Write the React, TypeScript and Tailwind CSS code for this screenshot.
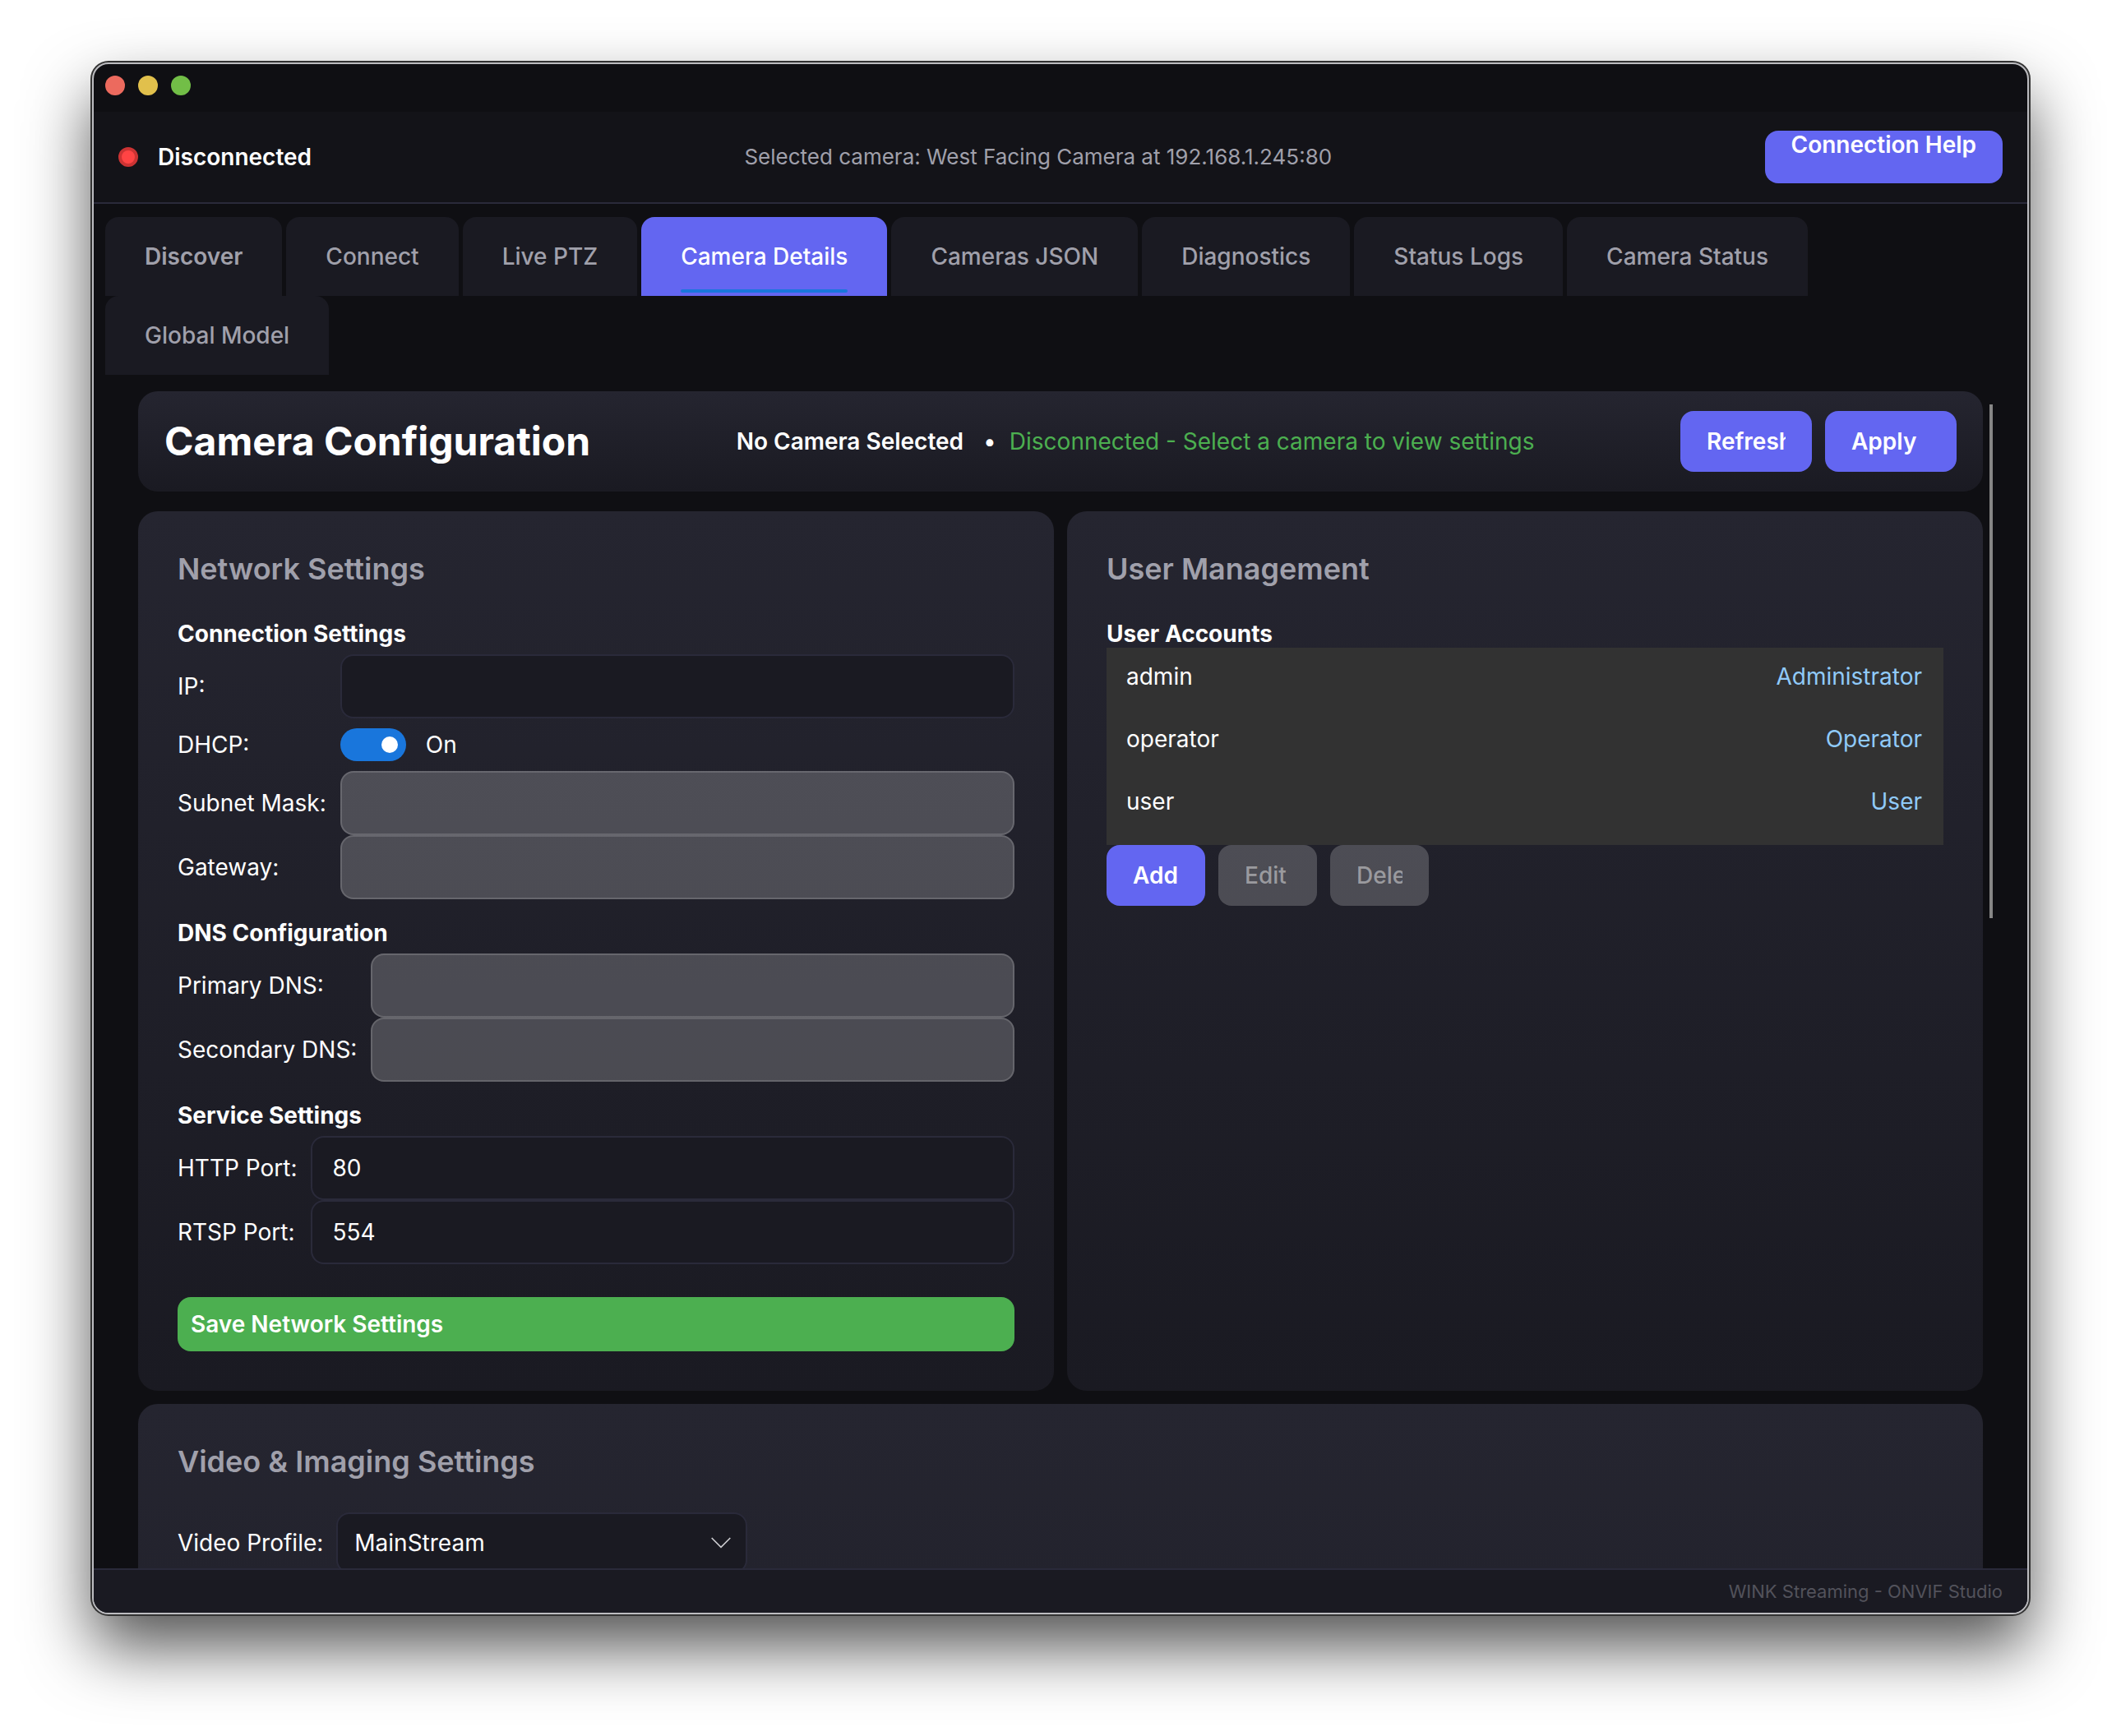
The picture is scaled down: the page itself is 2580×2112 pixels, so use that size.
import { useState, type ReactNode } from "react";

const tabs = [
  "Discover",
  "Connect",
  "Live PTZ",
  "Camera Details",
  "Cameras JSON",
  "Diagnostics",
  "Status Logs",
  "Camera Status",
  "Global Model",
];

const users = [
  { name: "admin", role: "Administrator" },
  { name: "operator", role: "Operator" },
  { name: "user", role: "User" },
];

function Card({ title, children, className = "" }: { title: string; children: ReactNode; className?: string }) {
  return (
    <section className={`rounded-3xl bg-linear-to-b from-[#252530] to-[#1a1a22] p-12 ${className}`}>
      <h2 className="mb-10 text-[36px] leading-[44px] font-semibold text-[#a0a0ab]">{title}</h2>
      {children}
    </section>
  );
}

function Field({ id, label, value, disabled }: { id: string; label: string; value?: string; disabled?: boolean }) {
  return (
    <>
      <label htmlFor={id} className="whitespace-nowrap">
        {label}
      </label>
      <input
        id={id}
        type="text"
        defaultValue={value}
        disabled={disabled}
        className="h-[78px] w-full min-w-0 rounded-2xl border-2 border-[#2a2a3a] bg-[#1a1a22] px-6 text-white outline-none disabled:border-white/15 disabled:bg-white/20"
      />
    </>
  );
}

function Group({ title, children }: { title: string; children: ReactNode }) {
  return (
    <fieldset className="min-w-0">
      <legend className="mb-2 font-bold">{title}</legend>
      <div className="grid grid-cols-[auto_1fr] items-center gap-x-[17px]">{children}</div>
    </fieldset>
  );
}

function ActionButton({ children, disabled, className }: { children: ReactNode; disabled?: boolean; className: string }) {
  return (
    <button
      type="button"
      disabled={disabled}
      className={`h-[74px] rounded-2xl bg-[#6366f1] px-8 text-left font-semibold text-white disabled:bg-white/20 disabled:font-medium disabled:text-white/45 ${className}`}
    >
      <span className="block overflow-hidden whitespace-nowrap">{children}</span>
    </button>
  );
}

export default function App() {
  const [active, setActive] = useState("Camera Details");
  const [dhcp, setDhcp] = useState(true);

  return (
    <div className="flex h-screen flex-col bg-white px-28 pt-[76px] pb-[148px] font-['Inter',sans-serif] text-[28px] leading-[34px] text-white">
      <div className="flex min-h-0 flex-1 flex-col overflow-hidden rounded-[20px] border-2 border-[#bcbcc0] bg-[#0f0f13] shadow-[0_0_0_2px_#333333,0_40px_80px_rgba(0,0,0,0.68)]">
        <div className="flex h-[58px] shrink-0 gap-4 px-3.5 pt-3.5">
          <button type="button" aria-label="Close" className="size-6 rounded-full bg-[#ec6a5e]" />
          <button type="button" aria-label="Minimize" className="size-6 rounded-full bg-[#e1c04c]" />
          <button type="button" aria-label="Zoom" className="size-6 rounded-full bg-[#72be47]" />
        </div>

        <header className="flex h-28 shrink-0 items-center justify-between border-b-2 border-[#2a2a3a] bg-[#131318] px-[30px]">
          <div className="flex items-center gap-6">
            <span className="size-6 rounded-full border-4 border-[#cc3333] bg-[#ff4444]" />
            <span className="font-semibold">Disconnected</span>
          </div>
          <p className="text-[26px] text-[#a0a0ab]">Selected camera: West Facing Camera at 192.168.1.245:80</p>
          <button type="button" className="flex h-16 items-start rounded-2xl bg-[#6366f1] px-8 font-semibold">
            Connection Help
          </button>
        </header>

        <nav role="tablist" className="flex shrink-0 flex-wrap gap-x-[5px] px-3.5 pt-4">
          {tabs.map((tab) => (
            <button
              key={tab}
              type="button"
              role="tab"
              aria-selected={tab === active}
              onClick={() => setActive(tab)}
              className="relative h-24 rounded-t-2xl bg-[#1a1a22] px-12 font-medium text-[#a0a0ab] first:font-semibold aria-selected:bg-[#6366f1] aria-selected:text-white"
            >
              {tab}
              {tab === active && <span className="absolute inset-x-12 bottom-1 h-1 rounded-full bg-[#1976dc]" />}
            </button>
          ))}
        </nav>

        <div className="flex min-h-0 flex-1 pt-5 pr-[42px] pl-[54px]">
          <main className="min-h-0 flex-1 overflow-y-auto [scrollbar-width:none]">
            <div className="flex items-center justify-between rounded-3xl bg-linear-to-b from-[#252530] to-[#1a1a22] px-8 py-6">
              <h1 className="text-[48px] leading-[58px] font-bold">Camera Configuration</h1>
              <p className="flex items-center">
                <span className="font-semibold">No Camera Selected</span>
                <span className="pr-4 pl-6">•</span>
                <span className="text-[#4caf50]">Disconnected - Select a camera to view settings</span>
              </p>
              <div className="flex gap-4">
                <ActionButton className="w-40">Refresh</ActionButton>
                <ActionButton className="w-40">Apply</ActionButton>
              </div>
            </div>

            <div className="mt-6 grid grid-cols-2 gap-4">
              <Card title="Network Settings">
                <form className="flex flex-col gap-6" onSubmit={(e) => e.preventDefault()}>
                  <Group title="Connection Settings">
                    <Field id="ip" label="IP:" />
                    <label htmlFor="dhcp">DHCP:</label>
                    <div className="flex h-16 items-center gap-6">
                      <input
                        id="dhcp"
                        type="checkbox"
                        role="switch"
                        checked={dhcp}
                        onChange={() => setDhcp(!dhcp)}
                        className="flex h-10 w-20 appearance-none items-center rounded-full bg-[#4c4c54] px-2.5 before:size-5 before:rounded-full before:bg-white checked:justify-end checked:bg-[#1976dc]"
                      />
                      <span>{dhcp ? "On" : "Off"}</span>
                    </div>
                    <Field id="subnet" label="Subnet Mask:" disabled={dhcp} />
                    <Field id="gateway" label="Gateway:" disabled={dhcp} />
                  </Group>
                  <Group title="DNS Configuration">
                    <Field id="dns1" label="Primary DNS:" disabled={dhcp} />
                    <Field id="dns2" label="Secondary DNS:" disabled={dhcp} />
                  </Group>
                  <Group title="Service Settings">
                    <Field id="http" label="HTTP Port:" value="80" />
                    <Field id="rtsp" label="RTSP Port:" value="554" />
                  </Group>
                  <button type="submit" className="mt-4 rounded-2xl bg-[#4caf50] p-4 text-left font-semibold">
                    Save Network Settings
                  </button>
                </form>
              </Card>

              <Card title="User Management">
                <h3 className="font-bold">User Accounts</h3>
                <ul className="h-60 overflow-hidden bg-[#323232]">
                  {users.map((user) => (
                    <li key={user.name} className="flex h-[76px] justify-between pt-[18px] pr-[26px] pl-6">
                      <span>{user.name}</span>
                      <span className="text-[#90caf9]">{user.role}</span>
                    </li>
                  ))}
                </ul>
                <div className="flex gap-4">
                  <ActionButton className="w-[120px]">Add</ActionButton>
                  <ActionButton className="w-[120px]" disabled>
                    Edit
                  </ActionButton>
                  <ActionButton className="w-[120px]" disabled>
                    Delete
                  </ActionButton>
                </div>
              </Card>
            </div>

            <Card title="Video & Imaging Settings" className="mt-4 min-h-[1200px]">
              <div className="flex items-center gap-4">
                <label htmlFor="profile">Video Profile:</label>
                <div className="relative w-[500px]">
                  <select
                    id="profile"
                    className="h-[74px] w-full appearance-none rounded-2xl border-2 border-[#2a2a3a] bg-[#1a1a22] px-5 outline-none"
                  >
                    <option>MainStream</option>
                    <option>SubStream</option>
                  </select>
                  <svg
                    viewBox="0 0 24 14"
                    className="pointer-events-none absolute top-1/2 right-5 h-3.5 w-6 -translate-y-1/2"
                    fill="none"
                    stroke="#cfcfd3"
                    strokeWidth="1.6"
                    aria-hidden="true"
                  >
                    <path d="M0.7 1 12 12.3 23.3 1" />
                  </svg>
                </div>
              </div>
            </Card>
          </main>
          <div className="mt-4 ml-2 h-[625px] w-1 shrink-0 bg-[#868686]" />
        </div>

        <footer className="flex h-[54px] shrink-0 items-center justify-end border-t-2 border-[#2a2a3a] bg-[#1a1a22] px-[30px] text-[22px] text-[#52525b]">
          WINK Streaming - ONVIF Studio
        </footer>
      </div>
    </div>
  );
}
